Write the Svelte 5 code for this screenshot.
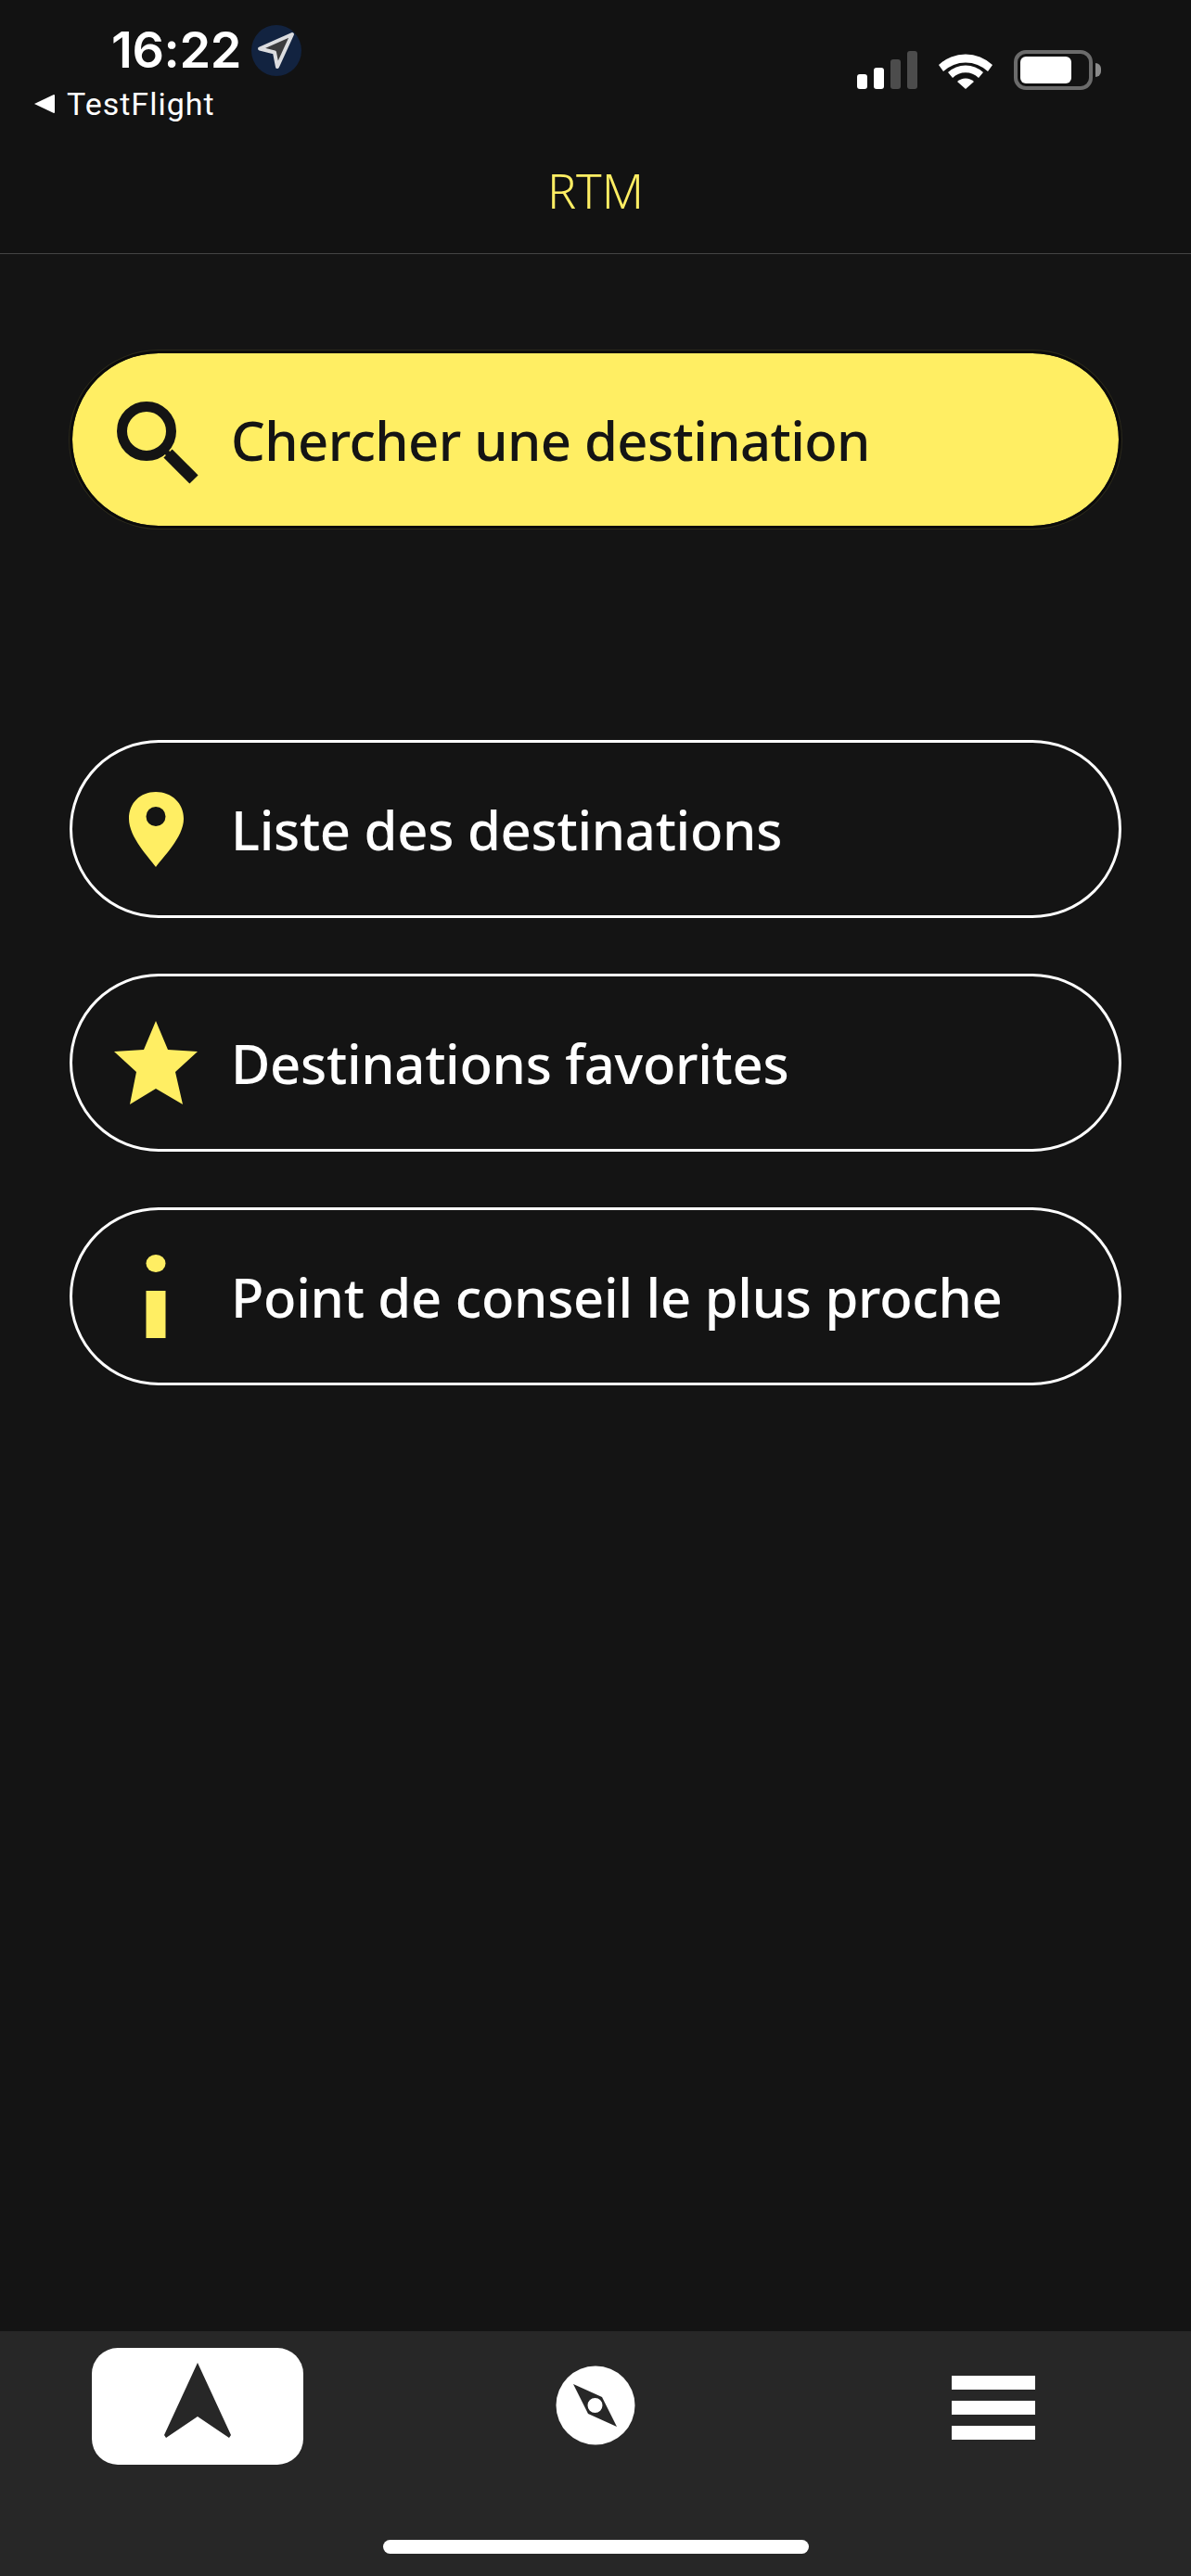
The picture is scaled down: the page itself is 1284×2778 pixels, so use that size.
<script>
  const items = [
    { label: 'Liste des destinations', icon: 'pin' },
    { label: 'Destinations favorites', icon: 'star' },
    { label: 'Point de conseil le plus proche', icon: 'info' }
  ];
</script>

<div class="page">
  <header class="top">
    <div class="status">
      <div class="left">
        <div class="time-row">
          <span class="time">16:22</span>
          <span class="loc">
            <svg width="54" height="55" viewBox="0 0 54 55">
              <path d="M44 10 L9 25.5 L25 29.5 L28 45 Z" fill="#3c3c3e" stroke="#dcdde0" stroke-width="4" stroke-linejoin="round"/>
            </svg>
          </span>
        </div>
        <div class="back-row">
          <svg width="22" height="22" viewBox="0 0 22 22"><path d="M0 11 L21 1 Q22 1 22 2 L22 20 Q22 21 21 21 Z" fill="#fff"/></svg>
          <span class="back">TestFlight</span>
        </div>
      </div>
      <div class="right">
        <div class="signal">
          <i class="b1"></i><i class="b2"></i><i class="b3"></i><i class="b4"></i>
        </div>
        <svg class="wifi" width="58" height="42" viewBox="0 0 58 42">
          <path d="M0 16 A42 42 0 0 1 58 16 L53 23 A35 35 0 0 0 5 23 Z" fill="#fff"/>
          <path d="M10 28 A28 28 0 0 1 48 28 L43 34 A20 20 0 0 0 15 34 Z" transform="translate(0 -4)" fill="#fff"/>
          <path d="M20 34 A13 13 0 0 1 38 34 L29 42 Z" fill="#fff"/>
        </svg>
        <div class="battery">
          <div class="shell"><div class="charge"></div></div>
          <div class="nub"></div>
        </div>
      </div>
    </div>
    <div class="title">RTM</div>
  </header>

  <main>
    <button class="pill primary">
      <svg class="ic" width="90" height="90" viewBox="0 0 90 90">
        <circle cx="35" cy="36" r="26.5" fill="none" stroke="#141414" stroke-width="11"/>
        <path d="M52 54 L60 62" stroke="#141414" stroke-width="6"/>
        <path d="M58 60 L86 88" stroke="#141414" stroke-width="13"/>
      </svg>
      <span>Chercher une destination</span>
    </button>

    <div class="list">
      {#each items as item}
        <button class="pill">
          <svg class="ic" width="90" height="90" viewBox="0 0 90 90">
            {#if item.icon === 'pin'}
              <path fill-rule="evenodd" fill="#ffee63" d="M45 86 C38 76 16 54 16 34 C16 17 28 5 45 5 C62 5 75 17 75 34 C75 54 52 76 45 86 Z M45 21 A10.5 10.5 0 1 0 45 42 A10.5 10.5 0 1 0 45 21 Z"/>
            {:else if item.icon === 'star'}
              <path fill="#ffee63" d="M45 0 L58 31 L90 33 L66 55 L74 90 L45 73 L17 90 L24 55 L0 33 L32 31 Z"/>
            {:else}
              <ellipse cx="45" cy="9.5" rx="10.5" ry="9.5" fill="#ffee63"/>
              <rect x="34.5" y="39" width="21" height="51" fill="#ffee63"/>
            {/if}
          </svg>
          <span>{item.label}</span>
        </button>
      {/each}
    </div>
  </main>

  <nav class="tabs">
    <div class="tab-row">
      <div class="tab active">
        <svg class="arrow" width="72" height="82" viewBox="0 0 72 82">
          <path d="M36 0 L72 78 L70 81 L36 58 L2 81 L0 78 Z" fill="#272727"/>
        </svg>
      </div>
      <div class="tab">
        <svg class="compass" width="86" height="86" viewBox="0 0 86 86">
          <circle cx="43" cy="43" r="42.5" fill="#fff"/>
          <path fill-rule="evenodd" fill="#272727" d="M19 20 L50 34 L66 66 L35 52 Z M42.5 35 A8 8 0 1 0 42.5 51 A8 8 0 1 0 42.5 35 Z"/>
        </svg>
      </div>
      <div class="tab">
        <div class="burger"><i></i><i></i><i></i></div>
      </div>
    </div>
    <div class="home"></div>
  </nav>
</div>

<style>
  :global(body) { margin: 0; background: #141414; }
  .page {
    width: 1284px;
    height: 2778px;
    display: flex;
    flex-direction: column;
    background: #141414;
    font-family: "Noto Sans", sans-serif;
    color: #fff;
    overflow: hidden;
  }
  .top {
    height: 273px;
    background: #121212;
    border-bottom: 1px solid #444;
    box-sizing: content-box;
    display: flex;
    flex-direction: column;
  }
  .status {
    height: 175px;
    display: flex;
    justify-content: space-between;
  }
  .left { padding: 26px 0 0 37px; }
  .time-row { display: flex; align-items: center; padding-left: 83px; gap: 11px; height: 55px; }
  .time { font: 600 54px/55px Inter, sans-serif; letter-spacing: -0.4px; }
  .loc {
    width: 54px; height: 55px; border-radius: 50%;
    background: #122340;
    display: flex;
    margin-top: 2px;
  }
  .back-row { display: flex; align-items: center; gap: 13px; margin-top: 16px; height: 30px; }
  .back { font: 400 34px/30px Roboto, sans-serif; letter-spacing: 1px; }
  .right { display: flex; align-items: flex-start; padding: 54px 0 0 0; margin-right: 97px; }
  .signal { display: flex; align-items: flex-end; gap: 7px; height: 42px; margin-right: 23px; }
  .signal i { display: block; width: 11px; border-radius: 3px; background: #fff; }
  .b1 { height: 16px; }
  .b2 { height: 23px; }
  .signal .b3 { height: 32px; background: #4c4c4c; }
  .signal .b4 { height: 41px; background: #4c4c4c; }
  .wifi { margin-right: 23px; }
  .battery { display: flex; align-items: center; gap: 3px; }
  .shell {
    width: 85px; height: 43px; box-sizing: border-box;
    border: 4px solid #6b6b6b; border-radius: 13px;
    padding: 3px;
  }
  .charge { width: 55px; height: 100%; background: #fff; border-radius: 6px; }
  .nub { width: 6px; height: 15px; background: #8a8a8a; border-radius: 0 8px 8px 0; }
  .title {
    text-align: center;
    color: #ffee63;
    font-size: 52px;
    line-height: 60px;
    font-weight: 300;
  }

  main {
    flex: 1;
    padding: 104px 75px 0;
    display: flex;
    flex-direction: column;
  }
  .pill {
    width: 1134px;
    height: 192px;
    box-sizing: border-box;
    border: 3px solid #fff;
    border-radius: 96px;
    background: #141414;
    color: #fff;
    display: flex;
    align-items: center;
    padding: 0 0 0 45px;
    font-family: "Noto Sans", sans-serif;
    font-size: 58px;
    font-weight: 500;
    letter-spacing: -0.3px;
    text-align: left;
  }
  .pill span { margin-left: 36px; white-space: nowrap; }
  .ic { overflow: visible; flex: none; }
  .primary {
    background: #ffee63;
    color: #141414;
    border-color: #0b0b0b;
    letter-spacing: -0.6px;
    box-shadow: 0 0 0 1px rgba(255, 238, 99, 0.1);
    background-clip: padding-box;
  }
  .list {
    margin-top: 228px;
    display: flex;
    flex-direction: column;
    gap: 60px;
  }

  .tabs {
    height: 264px;
    background: #272727;
    flex: none;
    display: flex;
    flex-direction: column;
    align-items: center;
  }
  .tab-row {
    display: flex;
    width: 1284px;
    gap: 201px;
    padding: 18px 0 0 99px;
    box-sizing: border-box;
    height: 225px;
  }
  .tab {
    width: 228px;
    height: 126px;
    border-radius: 28px;
    display: flex;
    align-items: center;
    justify-content: center;
  }
  .active { background: #fff; }
  .arrow { margin-bottom: 12px; }
  .compass { margin-bottom: 3px; }
  .burger { width: 90px; display: flex; flex-direction: column; gap: 12px; margin-top: 2px; }
  .burger i { display: block; height: 15px; background: #fff; }
  .home { width: 459px; height: 15px; border-radius: 8px; background: #fff; }
</style>
